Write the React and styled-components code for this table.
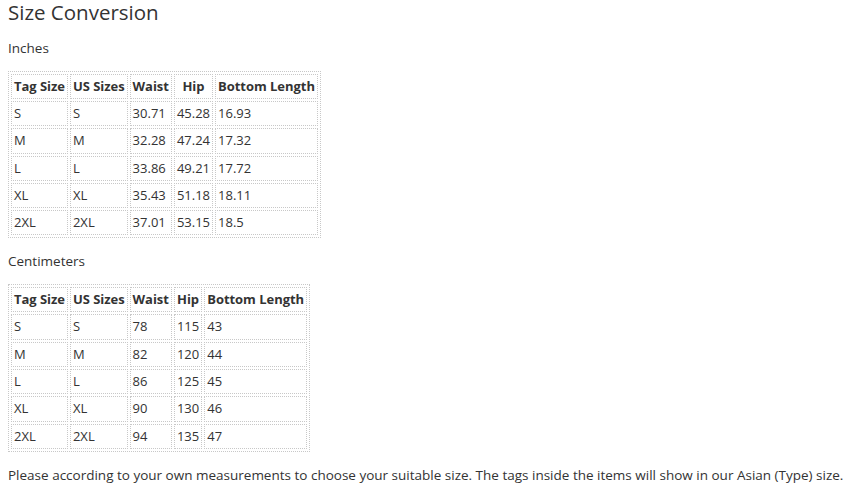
import React from "react";
import styled, { createGlobalStyle } from "styled-components";

const inches = [
  ["S", "S", "30.71", "45.28", "16.93"],
  ["M", "M", "32.28", "47.24", "17.32"],
  ["L", "L", "33.86", "49.21", "17.72"],
  ["XL", "XL", "35.43", "51.18", "18.11"],
  ["2XL", "2XL", "37.01", "53.15", "18.5"],
];

const centimeters = [
  ["S", "S", "78", "115", "43"],
  ["M", "M", "82", "120", "44"],
  ["L", "L", "86", "125", "45"],
  ["XL", "XL", "90", "130", "46"],
  ["2XL", "2XL", "94", "135", "47"],
];

const headers = ["Tag Size", "US Sizes", "Waist", "Hip", "Bottom Length"];

const SizeTable = ({ rows }) => (
  <Table>
    <tbody>
      <tr>
        {headers.map((h) => (
          <Th key={h}>{h}</Th>
        ))}
      </tr>
      {rows.map((r) => (
        <tr key={r[0]}>
          {r.map((c, i) => (
            <Td key={i}>{c}</Td>
          ))}
        </tr>
      ))}
    </tbody>
  </Table>
);

const App = () => (
  <Page>
    <GlobalStyles />
    <Title>Size Conversion</Title>
    <Label>Inches</Label>
    <SizeTable rows={inches} />
    <Label $top={13}>Centimeters</Label>
    <SizeTable rows={centimeters} />
    <Note>
      Please according to your own measurements to choose your suitable size. The tags inside the
      items will show in our Asian (Type) size.
    </Note>
  </Page>
);

const GlobalStyles = createGlobalStyle`
  html { box-sizing: border-box; }
  *, *::before, *::after { box-sizing: inherit; }
  body {
    margin: 0;
    background: #fff;
    overflow: hidden;
  }
`;

const Page = styled.div`
  padding: 0 8px;
  font-family: "Open Sans", "Noto Sans", sans-serif;
  font-size: 13.5px;
  color: #333;
`;

const Title = styled.h2`
  margin: 0;
  font-size: 20.5px;
  font-weight: normal;
  line-height: 24px;
`;

const Label = styled.p`
  margin: ${(p) => p.$top ?? 14}px 0 13px;
  line-height: 20px;
`;

const Table = styled.table`
  border: 1px dotted #c8c8c8;
  border-spacing: 2px;
  white-space: nowrap;
  font-size: 13px;
  color: #333;
`;

const Th = styled.th`
  border: 1px dotted #c8c8c8;
  padding: 1px 2px;
  line-height: 21px;
  font-weight: bold;
  letter-spacing: -0.04px;
`;

const Td = styled.td`
  border: 1px dotted #c8c8c8;
  padding: 1px 2px;
  line-height: 21.3px;
`;

const Note = styled.p`
  margin: 13px 0 0;
  line-height: 20px;
  white-space: nowrap;
`;

export default App;
